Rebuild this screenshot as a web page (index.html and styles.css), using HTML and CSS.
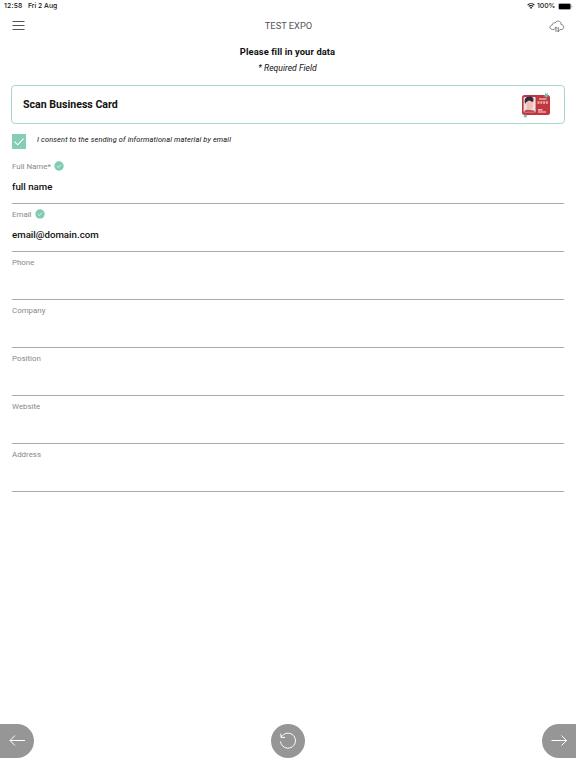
FILE: index.html
```html
<!DOCTYPE html>
<html lang="en">
<head>
  <meta charset="UTF-8" />
  <meta name="viewport" content="width=device-width, initial-scale=1.0" />
  <title>Test Expo</title>
  <link rel="stylesheet" href="styles.css">
</head>
<body>
  <div class="status-bar">
    <span class="status-time">12:58</span>
    <span class="status-date">Fri 2 Aug</span>
    <svg class="wifi" viewBox="0 0 16 12">
      <path d="M1.2 4.2a10 10 0 0 1 13.6 0M3.6 7a6.500 6.500 0 0 1 8.800 0" fill="none" stroke="#111" stroke-width="2.200"/>
      <path d="M5.500 9a3.800 3.800 0 0 1 5 0L8 11.800z" fill="#111"/>
    </svg>
    <span class="status-percent">100%</span>
    <svg class="battery" viewBox="0 0 15 7">
      <rect x=".25" y=".25" width="12.800" height="6.500" rx="1.700" fill="#fff" stroke="#999" stroke-width=".5"/>
      <rect x=".8" y=".8" width="11.700" height="5.400" rx="1.200" fill="#000"/>
      <path d="M13.700 2.500v2q.8-.3.8-1t-.8-1" fill="#999"/>
    </svg>
  </div>

  <header class="header">
    <button class="icon-button" aria-label="Menu">
      <svg class="menu-icon" viewBox="0 0 13 11">
        <path d="M.5 1.500h12M.5 5.500h12M.5 9.500h12" fill="none" stroke="#555" stroke-width="1"/>
      </svg>
    </button>
    <h1 class="header-title">TEST EXPO</h1>
    <button class="icon-button" aria-label="Sync">
      <svg class="cloud-icon" viewBox="0 0 16 13" fill="none" stroke="#666" stroke-width=".8" stroke-linecap="round" stroke-linejoin="round">
        <path d="M5 9.500H3.300C.2 9.100.1 5.500 3.200 5.100 3.200 2.900 5.300 2.400 6.100 3.100 7.500-.1 12.300.5 12.100 4.500 15.600 4.700 15.500 9.300 12.300 9.500H11"/>
        <path d="M6.900 11.500V7.200M5.700 8.400l1.200-1.200 1.100 1.200M9.300 7.400v4.300M8.200 10.600l1.100 1.200 1.200-1.200"/>
      </svg>
    </button>
  </header>

  <main class="form-section">
    <h2 class="form-title">Please fill in your data</h2>
    <p class="required-note">* Required Field</p>

    <button class="scan-button">
      <span class="scan-label">Scan Business Card</span>
      <svg class="card-icon" viewBox="0 0 30 26">
        <rect x="1" y="3" width="28" height="20" rx="2.500" fill="#c2363e"/>
        <rect x="2.600" y="5" width="12" height="15.500" rx="1" fill="#e9e3e4"/>
        <path d="M3 20.500c0-2 2-2.700 4-3l3 .5c2 .3 4 .5 4 2.500z" fill="#b8505a"/>
        <path d="M5.500 8h6.500v5.500c0 6-6.500 6-6.500 0z" fill="#f4bfb4"/>
        <path d="M4.200 12C2.500 7 5 4.500 8 4.700c3-1 5.500 1.800 4.200 5-2.200.3-3.200-1.200-4.200-1.200S6.300 10 5.300 10z" fill="#302b3c"/>
        <path d="M18 7h7.500" stroke="#f5cdd0" stroke-width="1.200"/>
        <path d="M16.500 10.500H27" stroke="#dcb5a9" stroke-width="2.600" stroke-dasharray="2 .8"/>
        <path d="M17 17.800h4.500M17 20h8" stroke="#f8dfe1" stroke-width="1.200"/>
        <path d="M24 .5l1.300 1.700L27 .7l-.5 2.600 1.500 1-2 .4-.7 1.500-1-1.700-2-.3 1.700-1.200zM4 22l1 1.200 1.700.3-1.200 1L5.300 26 4 25l-1.500.3.500-1.500z" fill="#78b9a8"/>
      </svg>
    </button>

    <label class="consent">
      <span class="checkbox">
        <svg viewBox="0 0 14 14"><path d="M2.500 6.600l3.200 3.200 5.800-6.200" fill="none" stroke="#fff" stroke-width="1.100"/></svg>
      </span>
      <span class="consent-text">I consent to the sending of informational material by email</span>
    </label>

    <div class="input-group">
      <div class="input-label">
        <span>Full Name*</span>
        <svg class="valid-icon" viewBox="0 0 10 10"><circle cx="5" cy="5" r="4.700" fill="#80cbb2"/><path d="M2.800 5.100l1.500 1.400 2.700-2.900" fill="none" stroke="#fff" stroke-width=".7"/></svg>
      </div>
      <div class="input-field">full name</div>
    </div>
    <div class="input-group">
      <div class="input-label">
        <span>Email</span>
        <svg class="valid-icon" viewBox="0 0 10 10"><circle cx="5" cy="5" r="4.700" fill="#80cbb2"/><path d="M2.800 5.100l1.500 1.400 2.700-2.900" fill="none" stroke="#fff" stroke-width=".7"/></svg>
      </div>
      <div class="input-field">email@domain.com</div>
    </div>
    <div class="input-group">
      <div class="input-label">Phone</div>
      <div class="input-field"></div>
    </div>
    <div class="input-group">
      <div class="input-label">Company</div>
      <div class="input-field"></div>
    </div>
    <div class="input-group">
      <div class="input-label">Position</div>
      <div class="input-field"></div>
    </div>
    <div class="input-group">
      <div class="input-label">Website</div>
      <div class="input-field"></div>
    </div>
    <div class="input-group">
      <div class="input-label">Address</div>
      <div class="input-field"></div>
    </div>
  </main>

  <footer class="footer">
    <button class="nav-button nav-back" aria-label="Back">
      <svg viewBox="0 0 34 34"><path d="M25 16.500H10M15 11.500l-5 5 5 5"/></svg>
    </button>
    <button class="nav-button nav-reset" aria-label="Reset">
      <svg viewBox="0 0 34 34"><path d="M10.300 13.200A7.500 7.500 0 1 1 9.500 17.500M9.700 9.700l.4 3.800 4-.2"/></svg>
    </button>
    <button class="nav-button nav-next" aria-label="Next">
      <svg viewBox="0 0 34 34"><path d="M9.500 16.500h15M19.500 11.500l5 5-5 5"/></svg>
    </button>
  </footer>
</body>
</html>
```

FILE: styles.css
```css
* {
  margin: 0;
  padding: 0;
  box-sizing: border-box;
}

body {
  font-family: Roboto, 'Liberation Sans', sans-serif;
  background: #fff;
  color: #111;
  height: 768px;
  display: flex;
  flex-direction: column;
  overflow: hidden;
}

button {
  border: none;
  background: none;
  font-family: inherit;
  color: inherit;
}

svg {
  display: block;
}

.status-bar {
  height: 12px;
  padding: 0 3px 0 4px;
  display: flex;
  align-items: center;
  font-family: Inter, sans-serif;
  font-size: 6.8px;
  font-weight: 500;
  line-height: 12px;
  white-space: nowrap;
}

.status-time {
  width: 24px;
  letter-spacing: 0.2px;
}

.status-date {
  flex: 1;
}

.wifi {
  width: 8px;
  height: 6px;
  margin-right: 2px;
}

.status-percent {
  width: 19px;
  margin-right: 2px;
}

.battery {
  width: 15px;
  height: 7px;
}

.header {
  height: 27px;
  padding: 0 11px 0 12px;
  display: flex;
  align-items: center;
  justify-content: space-between;
}

.icon-button {
  width: 16px;
}

.menu-icon {
  width: 13px;
  height: 11px;
}

.cloud-icon {
  width: 16px;
  height: 13px;
  margin-top: 2px;
}

.header-title {
  color: #555;
  font-size: 9.3px;
  font-weight: 400;
  line-height: 12px;
}

.form-section {
  flex: 1;
  padding: 6px 12px 0 11px;
}

.form-title {
  text-align: center;
  font-size: 9.4px;
  font-weight: 700;
  letter-spacing: 0.08px;
  line-height: 14px;
}

.required-note {
  margin-top: 3px;
  text-align: center;
  font-size: 8.6px;
  font-style: italic;
  line-height: 13px;
}

.scan-button {
  width: 554px;
  height: 39px;
  margin-top: 10px;
  padding: 0 13px 0 11px;
  border: 1px solid #a5d8c7;
  border-radius: 4px;
  display: flex;
  align-items: center;
  justify-content: space-between;
}

.scan-label {
  font-size: 10.6px;
  font-weight: 700;
}

.card-icon {
  width: 30px;
  height: 26px;
}

.consent {
  margin-top: 10px;
  height: 15px;
  padding-left: 1px;
  display: flex;
}

.checkbox {
  width: 14px;
  height: 15px;
  margin-right: 11px;
  padding-top: 1px;
  background: #86cdb6;
}

.consent-text {
  font-size: 7.4px;
  font-style: italic;
  letter-spacing: 0.14px;
  line-height: 12px;
}

.input-group {
  height: 48px;
  margin-left: 1px;
  border-bottom: 1px solid #aaa;
}

.consent + .input-group {
  margin-top: 7px;
}

.input-label {
  height: 21px;
  display: flex;
  align-items: center;
  gap: 3px;
  color: #888;
  font-size: 7.9px;
}

.valid-icon {
  width: 10px;
  height: 10px;
  margin-top: -1px;
}

.input-field {
  height: 20px;
  font-size: 9.7px;
  font-weight: 500;
  line-height: 20px;
}

.footer {
  height: 44px;
  padding-bottom: 10px;
  display: flex;
  justify-content: space-between;
}

.nav-button {
  width: 34px;
  height: 34px;
  background: #969696;
}

.nav-button path {
  fill: none;
  stroke: #fff;
  stroke-width: 1;
}

.nav-back {
  border-radius: 0 17px 17px 0;
}

.nav-reset {
  border-radius: 50%;
}

.nav-next {
  border-radius: 17px 0 0 17px;
}
```
